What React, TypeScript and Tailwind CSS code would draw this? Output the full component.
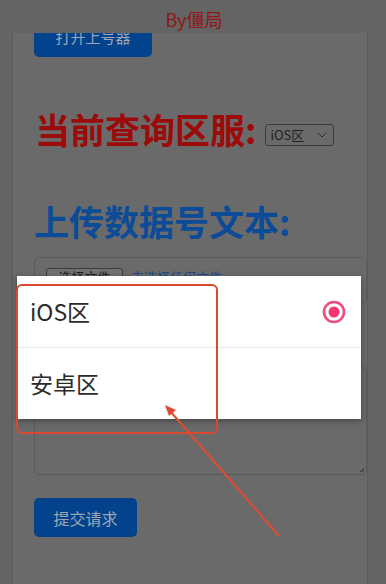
import React from 'react';

const cjk = '"Noto Sans CJK SC", "Noto Sans", sans-serif';

const regions = [
  { id: 'ios', label: 'iOS区', selected: true },
  { id: 'android', label: '安卓区', selected: false },
];

export default function App() {
  return (
    <div
      className="relative w-[386px] h-[584px] overflow-hidden bg-[#646464]"
      style={{ fontFamily: cjk }}
    >
      {/* fixed header */}
      <div className="absolute inset-x-0 top-0 z-10 h-[33px] bg-[#646464] flex items-center justify-center">
        <span className="text-[18px] text-[#8f1717] mt-[6px] ml-[2px]">By僵局</span>
      </div>

      {/* page card */}
      <div className="ml-[12px] w-[356px] mt-[-12px] h-[620px] border-x border-[#5c5c5c] bg-[#6a6a6a] pl-[21px] pr-0 pt-[30px]">
        <button className="h-[39px] w-[118px] rounded-[5px] bg-[#03428c] text-[15px] text-[#9ea7b3]">
          打开上号器
        </button>

        <div className="mt-[49px] flex h-[44px] items-center">
          <h2 className="text-[35px] font-bold leading-none text-[#9c0a0a] ml-[1px]">
            当前查询区服:
          </h2>
          <div className="ml-[9px] mt-[13px] flex h-[22px] w-[69px] items-center justify-between rounded-[3px] border border-[#3c3c3c] pl-[4px] pr-[6px]">
            <span className="text-[13px] leading-none text-[#1f1f1f]">iOS区</span>
            <svg width="10" height="6" viewBox="0 0 10 6" fill="none">
              <path d="M1 1l4 4 4-4" stroke="#2a2a2a" strokeWidth="1" />
            </svg>
          </div>
        </div>

        <div className="mt-[48px] flex h-[44px] items-center">
          <h2 className="text-[35px] font-bold leading-none text-[#0c4b98]">上传数据号文本:</h2>
        </div>

        <div className="mt-[15px] h-[46px] rounded-[6px] border border-[#5a5a5a] px-[11px] pt-[10px] flex items-start gap-[8px]">
          <div className="h-[18px] w-[77px] rounded-[3px] border border-[#3c3c3c] bg-[#707070] text-[13px] leading-[16px] text-center text-[#222]">
            选择文件
          </div>
          <span className="text-[13px] leading-[18px] text-[#1d4a86]">未选择任何文件</span>
        </div>

        <div className="relative mt-[64px] h-[108px] rounded-[5px] border border-[#5a5a5a]">
          <svg className="absolute right-[1px] bottom-[1px]" width="6" height="6" viewBox="0 0 6 6">
            <path d="M5 1L1 5M5 3L3 5" stroke="#333" strokeWidth="1" />
          </svg>
        </div>

        <button className="mt-[23px] h-[39px] w-[103px] rounded-[5px] bg-[#03428c] text-[16px] text-[#9ea7b3]">
          提交请求
        </button>
      </div>

      {/* select dialog */}
      <div className="absolute left-[17px] top-[276px] w-[344px] bg-white shadow-[0_2px_6px_rgba(0,0,0,0.35)]">
        {regions.map((r, i) => (
          <div
            key={r.id}
            className={`flex items-center justify-between pl-[13px] pr-[15px] ${i === 0 ? 'h-[72px] border-b border-[#e6e6e6]' : 'h-[71px]'}`}
          >
            <span className="text-[23px] text-[#2b2b2b]">{r.label}</span>
            {r.selected && (
              <svg width="24" height="24" viewBox="0 0 24 24">
                <circle cx="12" cy="12" r="10" fill="none" stroke="#ea4d80" strokeWidth="2.6" />
                <circle cx="12" cy="12" r="5.5" fill="#f2376f" />
              </svg>
            )}
          </div>
        ))}
      </div>

      {/* annotation */}
      <div className="absolute left-[16px] top-[284px] h-[150px] w-[202px] rounded-[6px] border-2 border-[#d9482f]" />
      <svg className="pointer-events-none absolute inset-0" width="386" height="584" viewBox="0 0 386 584">
        <line x1="279" y1="536" x2="170" y2="411" stroke="#e04b33" strokeWidth="2" />
        <path d="M165 405 L176 410 L169 416 Z" fill="#e04b33" />
      </svg>
    </div>
  );
}
